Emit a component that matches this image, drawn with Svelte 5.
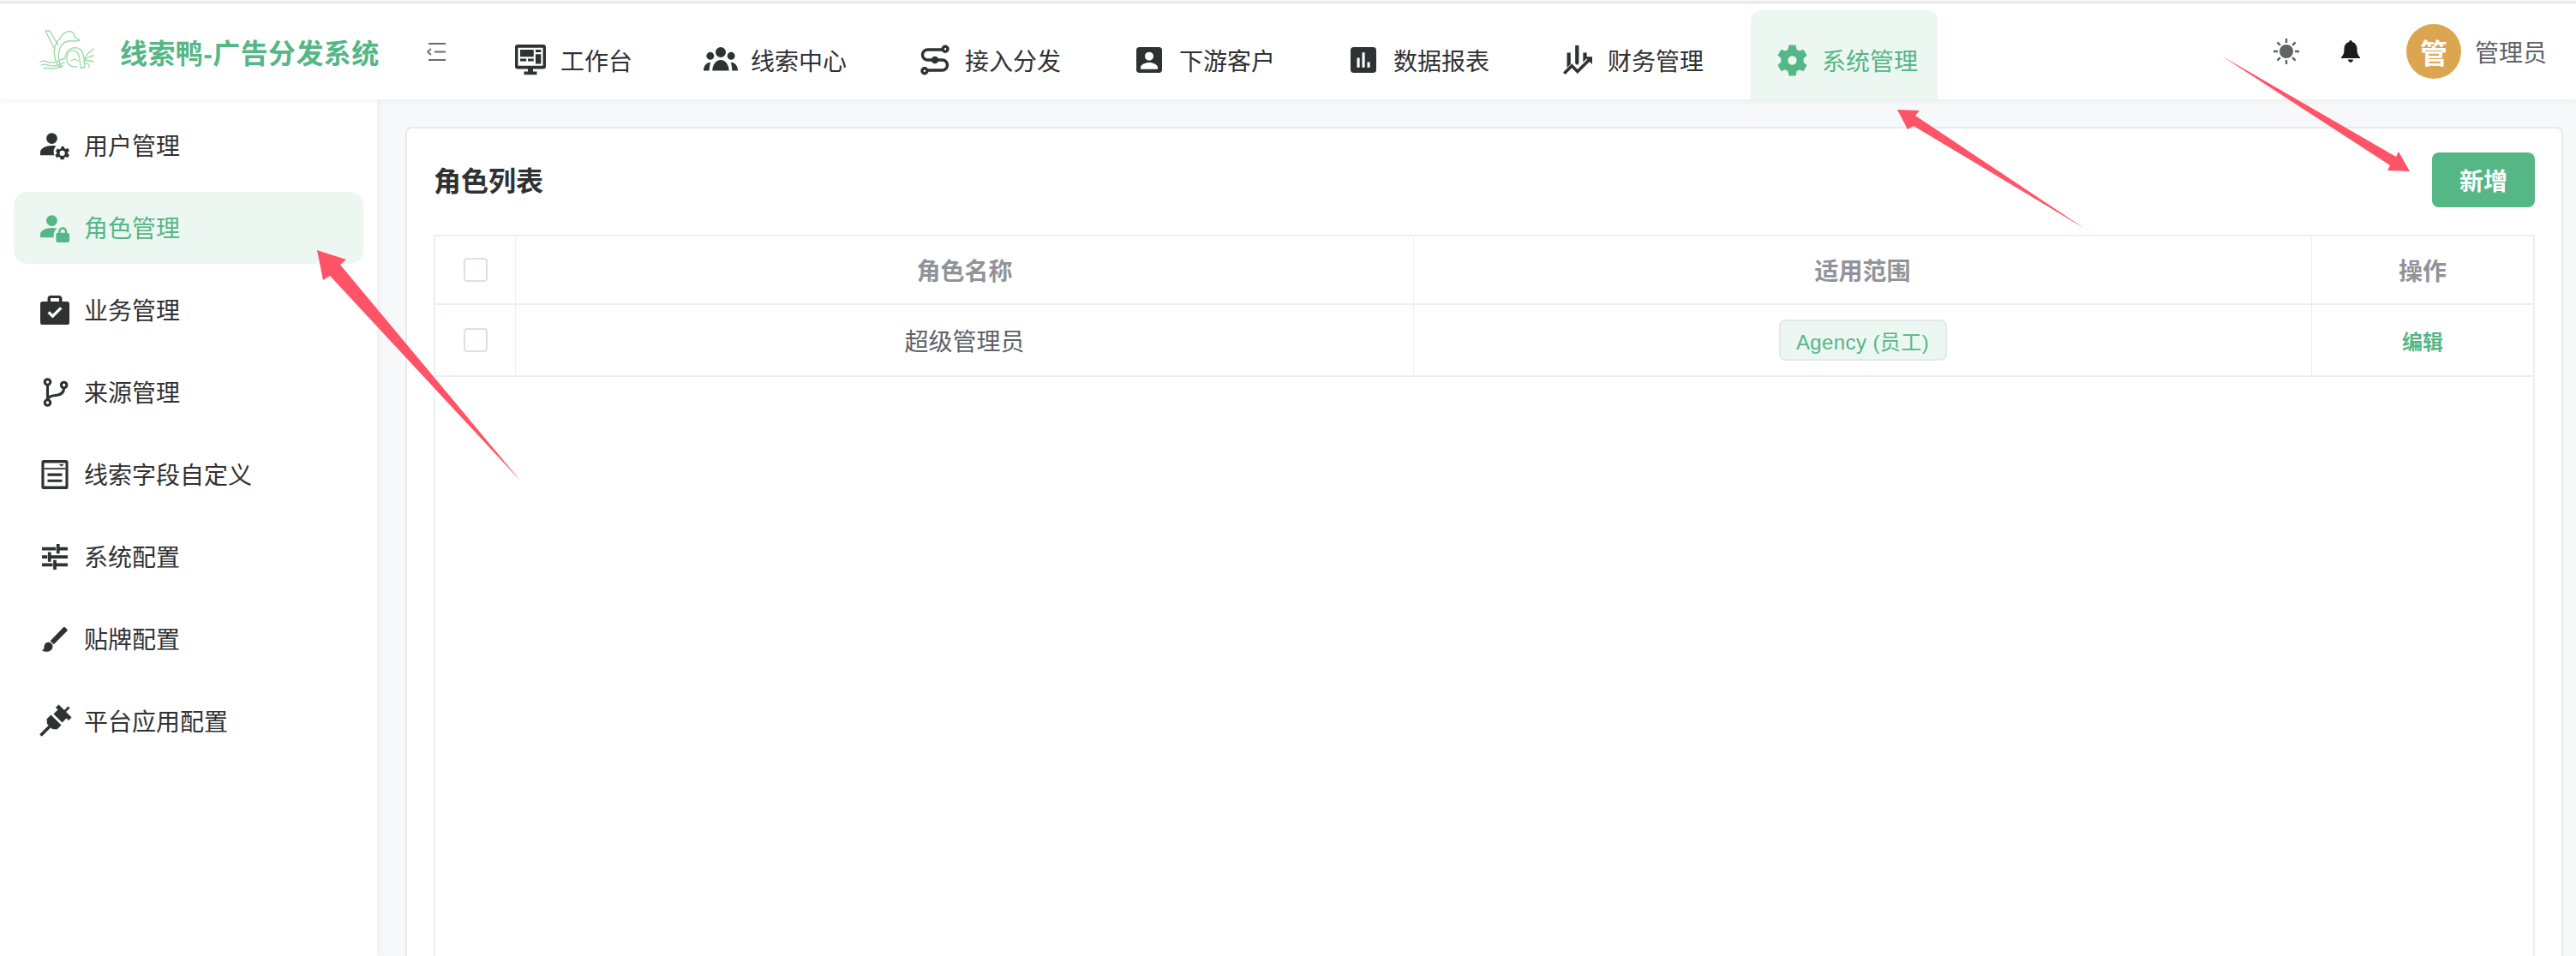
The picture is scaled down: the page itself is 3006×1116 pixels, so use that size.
<script>
  const nav = [
    { label: "工作台", icon: "monitor" },
    { label: "线索中心", icon: "groups" },
    { label: "接入分发", icon: "route" },
    { label: "下游客户", icon: "contact" },
    { label: "数据报表", icon: "chart" },
    { label: "财务管理", icon: "finance" },
    { label: "系统管理", icon: "gear", active: true }
  ];

  const side = [
    { label: "用户管理", icon: "usergear" },
    { label: "角色管理", icon: "userlock", active: true },
    { label: "业务管理", icon: "case" },
    { label: "来源管理", icon: "fork" },
    { label: "线索字段自定义", icon: "form" },
    { label: "系统配置", icon: "tune" },
    { label: "贴牌配置", icon: "brush" },
    { label: "平台应用配置", icon: "plug" }
  ];

  const arrows = [
    "608,562 397,309 404,303 370,292 377,327 385,322",
    "2433,267 2235,135 2240,129 2214,128 2226,151 2233,147",
    "2592,65 2796,183 2799,177 2812,200 2786,199 2789,193"
  ];
</script>

{#snippet glyph(name)}
  <svg class="glyph {name}" viewBox="0 0 24 24" fill="currentColor" aria-hidden="true">
    {#if name === "monitor"}
      <path fill-rule="evenodd" d="M2 0h20a2 2 0 0 1 2 2v15a2 2 0 0 1-2 2h-8v2h3v2.500H7V21h3v-2H2a2 2 0 0 1-2-2V2a2 2 0 0 1 2-2zM2.300 2.500v14h19.400v-14z"/>
      <path d="M4 4h10.500v5.500H4zM16 4h4.200v2H16zM16 7.500h4.200v7.500H16zM4 11h4.800v2H4zM10 11h4.500v2H10z"/>
    {:else if name === "groups"}
      <path d="M12 3a3.600 3.600 0 1 1 0 7.200A3.600 3.600 0 0 1 12 3zM4.700 6.500a2.700 2.700 0 1 1 0 5.400 2.700 2.700 0 0 1 0-5.400zm14.600 0a2.700 2.700 0 1 1 0 5.400 2.700 2.700 0 0 1 0-5.400zM6.200 19.500c0-3.900 2.400-7.500 5.800-7.500s5.800 3.600 5.800 7.500zM0 19.500c0-2.800 1.500-5.500 4.900-5.800-.5 1.800-.9 3.800-.9 5.800zm24 0c0-2.800-1.500-5.500-4.900-5.800.5 1.800.9 3.800.9 5.800z"/>
    {:else if name === "route"}
      <g fill="none" stroke="currentColor" stroke-width="2.400">
        <circle cx="20.500" cy="3" r="2.100"/><circle cx="3.500" cy="21" r="2.100"/>
        <path d="M18.300 3.500H6a4.200 4.200 0 0 0 0 8.500h12a4.200 4.200 0 0 1 0 8.500H5.700"/>
      </g>
      <circle cx="12" cy="12" r="3"/>
    {:else if name === "contact"}
      <path fill-rule="evenodd" d="M3 0h18a3 3 0 0 1 3 3v18a3 3 0 0 1-3 3H3a3 3 0 0 1-3-3V3a3 3 0 0 1 3-3zm9 4.500a4 4 0 1 0 0 8 4 4 0 0 0 0-8zM4 19v1.500h16V19c0-2.900-4.400-4.700-8-4.700S4 16.100 4 19z"/>
    {:else if name === "chart"}
      <path fill-rule="evenodd" d="M3 0h18a3 3 0 0 1 3 3v18a3 3 0 0 1-3 3H3a3 3 0 0 1-3-3V3a3 3 0 0 1 3-3zm3 10v9h2.500v-9zm4.800-5v14h2.500V5zm4.800 9v5h2.500v-5z"/>
    {:else if name === "finance"}
      <path d="M10 0h3v14.800l-1.500 1.500-1.500-1.500zM3.200 6h3v9.300l-3 3zM16.500 6h3v4.800l-3 3z"/>
      <path d="M0 22.300l7.200-7.300 4.700 4.700L20 11.600l-2.300-2.300H24v6.300l-2.200-2.200-9.900 9.900L7.200 18.600 1.800 24z"/>
    {:else if name === "gear"}
      <path fill-rule="evenodd" d="M14.500 1l.6 3.200 1.900 1.100 3-1.100 2.500 4.300-2.400 2.100v2.800l2.400 2.100-2.500 4.300-3-1.100-1.900 1.100-.6 3.200h-5l-.6-3.200L7 18.600 4 19.700 1.500 15.400l2.400-2.100v-2.800L1.500 8.400 4 4.100l3 1.100 1.900-1.100.6-3.200zM12 8.800a3.200 3.200 0 1 0 0 6.400 3.200 3.200 0 0 0 0-6.400z"/>
    {:else if name === "usergear"}
      <circle cx="9.500" cy="6" r="4.500"/>
      <path d="M0 20v-2.500C0 14 5 12 9.500 12c1.200 0 2.300.1 3.400.4-1 1.100-1.500 2.300-1.800 3.500-.2 1.500 0 3 .5 4.100z"/>
      <path fill-rule="evenodd" d="M19.400 12.500l.4 1.700 1.300.6 1.500-.8 1.400 2.200-1.300 1.100v1.400l1.300 1.100-1.400 2.200-1.500-.8-1.300.6-.4 1.700h-2.600l-.4-1.700-1.300-.6-1.500.8-1.400-2.200 1.300-1.100v-1.400L12.700 16.500l1.400-2.200 1.500.8 1.300-.6.400-1.700zM18.100 16a2.200 2.200 0 1 0 0 4.400 2.200 2.200 0 0 0 0-4.400z"/>
    {:else if name === "userlock"}
      <circle cx="9.500" cy="6" r="4.500"/>
      <path d="M0 20v-2.500C0 14 5 12 9.500 12c1.600 0 3.200.3 4.600.7-1.300.6-2.400 1.800-2.800 3.300-.3 1.300-.3 2.700-.3 4z"/>
      <path fill-rule="evenodd" d="M18.500 11.500c2.200 0 3.500 1.600 3.500 3.500v1h.5c.8 0 1.500.7 1.500 1.500v5c0 .8-.7 1.500-1.500 1.500h-8c-.8 0-1.500-.7-1.500-1.500v-5c0-.8.700-1.500 1.500-1.500h.5v-1c0-1.900 1.300-3.500 3.500-3.500zm0 1.700c-1.100 0-1.800.8-1.800 1.800v1h3.600v-1c0-1-.7-1.800-1.800-1.800z"/>
    {:else if name === "case"}
      <path fill-rule="evenodd" d="M8.500 0h7C16.900 0 18 1.100 18 2.500V5h4a2 2 0 0 1 2 2v15a2 2 0 0 1-2 2H2a2 2 0 0 1-2-2V7a2 2 0 0 1 2-2h4V2.500C6 1.100 7.100 0 8.500 0zm0 2.200v2.800h7V2.200zM6 14.500l4.200 4.200 7.800-7.800-1.700-1.600-6.100 6.100-2.500-2.500z"/>
    {:else if name === "fork"}
      <g fill="none" stroke="currentColor" stroke-width="2.200">
        <circle cx="6" cy="3.500" r="2.300"/><circle cx="6" cy="20.500" r="2.300"/><circle cx="19.500" cy="6" r="2.300"/>
        <path d="M6 5.800v12.400M19.500 8.300c0 4-2.500 5.500-5.500 6-3 .5-8 .5-8 4"/>
      </g>
    {:else if name === "form"}
      <path fill-rule="evenodd" d="M3 0h18a2 2 0 0 1 2 2v20a2 2 0 0 1-2 2H3a2 2 0 0 1-2-2V2a2 2 0 0 1 2-2zm.2 2.500v19h17.600v-19zM3 6.500h18v1.200H3zM6 11h12v2.200H6zm0 5h12v2.200H6zM15.500 3.500h4l-2 2z"/>
    {:else if name === "tune"}
      <path d="M0 3h13v3H0zM16.500 3H24v3h-7.500zM13.500 0h3v9h-3zM0 10.500h5v3H0zM8.500 10.500H24v3H8.500zM5.500 7.500h3v9h-3zM0 18h10v3H0zM13.500 18H24v3H13.500zM10.500 15h3v9h-3z"/>
    {:else if name === "brush"}
      <path d="M21.500 1l2 2c.4.400.4 1 0 1.400L11 17l-3.300-3.300L20 1c.4-.4 1.100-.4 1.500 0zM6 15c2.500 0 4 1.800 4 3.800 0 3-2.500 5-5.500 5-1.500 0-3-.5-4.500-1.300 1.500-.7 2-1.600 2-3 0-2.600 1.500-4.500 4-4.500z"/>
    {:else if name === "plug"}
      <g transform="rotate(45 12 12)">
        <path d="M11 -4.500h2V1h-2zM4.500 0h15v3.500h-15zM7 3.500h10v5H7z"/>
        <path d="M6 10.500h12v5l-3 2.500H9L6 15.500zM10.700 18h2.600v10.500h-2.600z"/>
      </g>
    {/if}
  </svg>
{/snippet}

<div class="page">
  <header class="topbar">
    <div class="brand">
      <svg class="logo" viewBox="0 0 64 47" fill="none" stroke="#9ad9a6" stroke-width="1.300" stroke-linecap="round" stroke-linejoin="round" aria-hidden="true">
        <path d="M7 1h5l10 17M7 1l11 22"/>
        <path d="M24 10C28 2 36-1 40 4l1 4 6 4-7 1c-7-1-13 1-16 8-3 8-2 16 2 23"/>
        <path d="M24 10c-6 5-8 14-6 22 1 5 3 9 6 12"/>
        <path d="M30 32c1-10 12-15 19-8 4 5 3 13 4 20h-5c-1-6 0-13-4-18-5-4-11-2-12 6-1 6 3 12 12 11"/>
        <path d="M37 36c3-2 6-2 8 0"/>
        <path d="M1 37c6-3 9 2 15 1 5 0 8-4 14-5M2 41c6-3 9 2 15 1 5 0 8-3 12-4M5 45c5-2 8 1 12 0 4 0 7-3 10-3"/>
        <path d="M53 33l3-5 7-6M53 34l6-3 4-1M53 35l6 1 4 1M52 37l5 3 1 3"/>
      </svg>
      <span class="title">线索鸭-广告分发系统</span>
      <svg class="collapse" viewBox="0 0 22 21" aria-hidden="true">
        <path d="M2 1h20M9 10.500h13M2 20h20" fill="none" stroke="#6b6c70" stroke-width="2"/>
        <path d="M5 7l-4 3.500L5 14" fill="none" stroke="#6b6c70" stroke-width="1.800"/>
      </svg>
    </div>

    <nav class="nav">
      {#each nav as item}
        <div class="nav-item" class:active={item.active}>
          <span class="nav-icon">{@render glyph(item.icon)}</span>
          <span>{item.label}</span>
        </div>
      {/each}
    </nav>

    <div class="actions">
      <svg class="sun" viewBox="0 0 30 30" aria-hidden="true">
        <circle cx="15" cy="15" r="8" fill="#606266"/>
        <path d="M15 0v5M15 25v5M0 15h5M25 15h5M4.400 4.400l3.500 3.500M22.100 22.100l3.500 3.500M4.400 25.600l3.500-3.500M22.100 7.900l3.500-3.500" stroke="#606266" stroke-width="2.400"/>
      </svg>
      <svg class="bell" viewBox="0 0 22 26" aria-hidden="true">
        <path fill="#1c1c1e" d="M11 0c1 0 1.800.8 1.800 2C16.500 3 18.500 6 18.500 10c0 5 1 7.500 3.500 10v1H0v-1c2.500-2.500 3.500-5 3.500-10 0-4 2-7 5.700-8C9.200.8 10 0 11 0zM8 22.500h6c0 1.800-1.300 3.200-3 3.200s-3-1.400-3-3.200z"/>
      </svg>
      <div class="user">
        <span class="avatar">管</span>
        <span class="user-name">管理员</span>
      </div>
    </div>
  </header>

  <div class="body">
    <aside class="sidebar">
      {#each side as item}
        <div class="side-item" class:active={item.active}>
          <span class="side-icon">{@render glyph(item.icon)}</span>
          <span class="side-label">{item.label}</span>
        </div>
      {/each}
    </aside>

    <main class="main">
      <section class="card">
        <div class="card-head">
          <h2>角色列表</h2>
          <button class="add">新增</button>
        </div>
        <div class="table">
          <div class="row head">
            <div class="cell"><span class="check"></span></div>
            <div class="cell">角色名称</div>
            <div class="cell">适用范围</div>
            <div class="cell">操作</div>
          </div>
          <div class="row">
            <div class="cell"><span class="check"></span></div>
            <div class="cell">超级管理员</div>
            <div class="cell"><span class="tag">Agency (员工)</span></div>
            <div class="cell"><span class="link">编辑</span></div>
          </div>
        </div>
      </section>
    </main>
  </div>

  <!-- annotation arrows painted over the screenshot -->
  <svg class="arrows" viewBox="0 0 3006 1116" aria-hidden="true">
    {#each arrows as points}
      <polygon {points} fill="#ff5468"/>
    {/each}
  </svg>
</div>

<style>
  :global(body) {
    margin: 0;
    overflow: hidden;
  }

  .page {
    position: relative;
    width: 3006px;
    height: 1116px;
    overflow: hidden;
    display: flex;
    flex-direction: column;
    background: #f7f8fa;
    color: #303133;
    font-family: "Liberation Sans", "Noto Sans CJK SC", sans-serif;
    font-size: 28px;
  }

  .topbar {
    position: relative;
    z-index: 2;
    flex: none;
    height: 112px;
    margin-top: 4px;
    display: flex;
    align-items: stretch;
    background: #fff;
    box-shadow: 0 2px 8px rgba(0, 0, 0, 0.05), 0 -2px 0 #e4e4e6;
  }

  .brand {
    display: flex;
    align-items: center;
    padding-left: 46px;
  }

  .logo {
    width: 64px;
    height: 47px;
    margin-right: 30px;
    margin-bottom: 3px;
  }

  .title {
    width: 301px;
    margin-right: 57px;
    color: #55b686;
    font-size: 32px;
    font-weight: 700;
    letter-spacing: 0.4px;
    white-space: nowrap;
  }

  .collapse {
    width: 22px;
    height: 21px;
  }

  .nav {
    display: flex;
    gap: 32px;
    margin-left: 51px;
    padding-top: 8px;
  }

  .nav-item {
    display: flex;
    align-items: center;
    padding: 12px 23px 0 24px;
    border-radius: 12px 12px 0 0;
    color: #303133;
    white-space: nowrap;
  }

  .nav-item.active {
    background: #edf7f2;
    color: #55b686;
  }

  .nav-icon {
    width: 48px;
    height: 48px;
    margin-right: 11px;
    display: flex;
    align-items: center;
    justify-content: center;
  }

  .glyph {
    width: 34px;
    height: 34px;
    overflow: visible;
  }

  .glyph.monitor {
    width: 36px;
    height: 36px;
  }

  .glyph.groups {
    width: 40px;
    height: 40px;
  }

  .glyph.contact,
  .glyph.chart {
    width: 30px;
    height: 30px;
  }

  .glyph.gear {
    width: 39px;
    height: 39px;
  }

  .glyph.tune,
  .glyph.brush {
    width: 30px;
    height: 30px;
  }

  .actions {
    margin-left: auto;
    padding-right: 34px;
    display: flex;
    align-items: center;
  }

  .sun {
    width: 30px;
    height: 30px;
    margin-right: 49px;
  }

  .bell {
    width: 22px;
    height: 26px;
    margin-right: 54px;
  }

  .user {
    display: flex;
    align-items: center;
    gap: 16px;
  }

  .avatar {
    width: 64px;
    height: 64px;
    display: flex;
    align-items: center;
    justify-content: center;
    border-radius: 50%;
    background: #dca651;
    color: #fff;
    font-size: 32px;
    font-weight: 700;
  }

  .user-name {
    color: #606266;
  }

  .body {
    flex: 1;
    min-height: 0;
    display: flex;
  }

  .sidebar {
    position: relative;
    z-index: 1;
    flex: none;
    width: 440px;
    box-sizing: border-box;
    padding: 12px 16px 0;
    background: #fff;
    box-shadow: 2px 0 10px rgba(0, 0, 0, 0.04);
  }

  .side-item {
    height: 84px;
    margin-bottom: 12px;
    padding-left: 31px;
    display: flex;
    align-items: center;
    border-radius: 16px;
    white-space: nowrap;
  }

  .side-item.active {
    background: #edf7f2;
    color: #55b686;
  }

  .side-icon {
    width: 34px;
    height: 34px;
    margin-right: 17px;
    display: flex;
    align-items: center;
    justify-content: center;
  }

  .side-label {
    margin-bottom: 2px;
  }

  .main {
    flex: 1;
    min-width: 0;
    padding: 32px 15px 0 33px;
  }

  .card {
    height: 1100px;
    box-sizing: border-box;
    padding: 28px 31px 0;
    background: #fff;
    border: 2px solid #e7e9ee;
    border-radius: 8px;
  }

  .card-head {
    height: 64px;
    margin-bottom: 32px;
    display: flex;
    align-items: center;
    justify-content: space-between;
  }

  h2 {
    margin: 0 0 2px;
    font-size: 32px;
    font-weight: 600;
    color: #303133;
  }

  .add {
    width: 120px;
    height: 64px;
    padding: 0;
    border: 0;
    border-radius: 8px;
    background: #55b686;
    color: #fff;
    font: inherit;
    font-weight: 600;
  }

  .table {
    height: 1000px;
    box-sizing: border-box;
    border: 2px solid #ebeef5;
    border-bottom: 0;
  }

  .row {
    display: grid;
    grid-template-columns: 94px 1048px 1048px 1fr;
    height: 82px;
    border-bottom: 2px solid #ebeef5;
    color: #606266;
  }

  .row.head {
    height: 78px;
    color: #909399;
    font-weight: 600;
  }

  .cell {
    display: flex;
    align-items: center;
    justify-content: center;
    border-right: 1px solid #ebeef5;
  }

  .cell:last-child {
    border-right: 0;
  }

  .check {
    width: 28px;
    height: 28px;
    box-sizing: border-box;
    border: 2px solid #dcdfe6;
    border-radius: 4px;
    background: #fff;
  }

  .tag {
    width: 196px;
    height: 48px;
    box-sizing: border-box;
    display: flex;
    align-items: center;
    justify-content: center;
    border: 2px solid #e3e8e8;
    border-radius: 8px;
    background: #edf7f2;
    color: #55b686;
    font-size: 24px;
    letter-spacing: 0.4px;
  }

  .link {
    color: #55b686;
    font-size: 24px;
    font-weight: 600;
  }

  .arrows {
    position: absolute;
    inset: 0;
    z-index: 3;
    width: 3006px;
    height: 1116px;
    pointer-events: none;
  }
</style>
